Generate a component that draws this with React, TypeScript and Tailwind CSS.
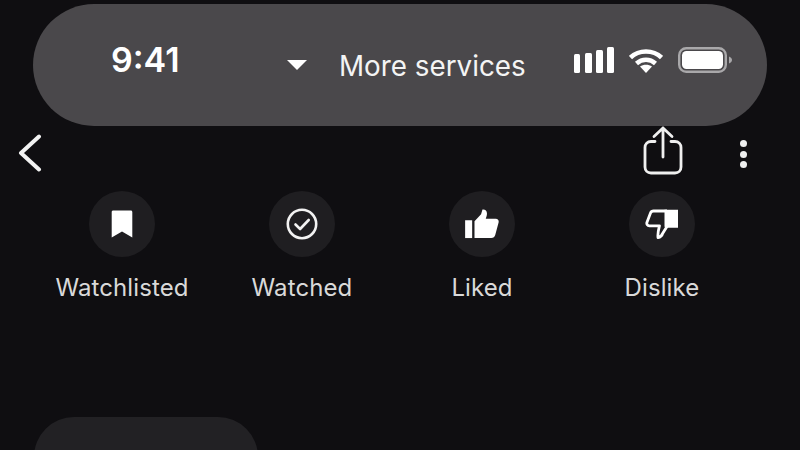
import React from 'react';

const font = { fontFamily: 'Inter' };

function Bookmark() {
  return (
    <svg width="22" height="28" viewBox="0 0 22 28" fill="white">
      <path d="M.7 2C.7 1 1.400.5 2.200.5h17.600c.9 0 1.500.6 1.500 1.500v25.500L11 21.500.7 27.500z" />
    </svg>
  );
}

function CheckCircle() {
  return (
    <svg width="34" height="34" viewBox="0 0 34 34" fill="none" stroke="#f2f2f2">
      <circle cx="17" cy="17" r="14.200" strokeWidth="2.600" />
      <path d="M10.500 17.500l4.600 4.500 8.600-9" strokeWidth="2.600" strokeLinecap="round" strokeLinejoin="round" />
    </svg>
  );
}

function ThumbUp() {
  return (
    <svg width="36" height="30" viewBox="0 0 36 32" fill="white">
      <rect x="0" y="12" width="7.500" height="19" />
      <path d="M10 13L17 5.500l1.500-5c2.800-.4 4.800 1.400 4.800 4.200 0 1.800-.5 3.500-1.300 5.600h10.500c2.600 0 3.800 2 3.200 4l-3.600 13.500c-.6 2-2 3.200-4.200 3.200H10z" />
    </svg>
  );
}

function ThumbDown() {
  return (
    <svg width="34" height="31" viewBox="0 0 34 31" fill="none">
      <path d="M22 2H8.500c-1.500 0-2.400.6-3 2L2 13.200c-.7 2 .5 3.600 2.400 3.600h10.100c-.6 2.600-2 6.200-1.500 11.700 3-.5 4-2 4.600-4l5-8" stroke="white" strokeWidth="2.800" strokeLinejoin="round" />
      <path d="M19.500.7H33v18H22l-2.500-1z" fill="white" />
    </svg>
  );
}

function Signal() {
  return (
    <svg width="40" height="26" viewBox="0 0 40 26" fill="white">
      <rect x="0" y="7" width="6" height="19" rx="1.500" />
      <rect x="11" y="6" width="7" height="20" rx="1.500" />
      <rect x="22" y="3" width="7" height="23" rx="1.500" />
      <rect x="33" y="0" width="7" height="26" rx="1.500" />
    </svg>
  );
}

function Wifi() {
  return (
    <svg width="34" height="25" viewBox="0 0 34 25" fill="none" stroke="white" strokeWidth="4.500">
      <path d="M1.500 9.500C10 1.500 24 1.500 32.500 9.500" />
      <path d="M7.500 15.500c5.500-5 13.500-5 19 0" />
      <path d="M17 25l-6-6.500c3.500-2.500 8.500-2.500 12 0z" fill="white" stroke="none" />
    </svg>
  );
}

function Battery() {
  return (
    <svg width="54" height="26" viewBox="0 0 54 26" fill="none">
      <rect x="1.200" y="1.200" width="46.600" height="23.600" rx="7" stroke="#a9a8aa" strokeWidth="2.400" />
      <rect x="4" y="4" width="41" height="18" rx="4.500" fill="white" />
      <path d="M51 9.500c2 .8 3 2 3 3.500s-1 2.700-3 3.500z" fill="#a9a8aa" />
    </svg>
  );
}

function Share() {
  return (
    <svg width="40" height="50" viewBox="0 0 40 50" fill="none" stroke="#efefef" strokeWidth="2.800" className="-mt-[5px]">
      <path d="M12 15.500H8c-3.500 0-6 2.500-6 6V41c0 3.500 2.500 6 6 6h24c3.500 0 6-2.500 6-6V21.500c0-3.500-2.500-6-6-6h-4" strokeLinecap="round" />
      <path d="M20 31V2M11 10.500L20 2l9 8.500" strokeLinecap="round" strokeLinejoin="round" />
    </svg>
  );
}

const actions = [
  { label: 'Watchlisted', icon: <Bookmark /> },
  { label: 'Watched', icon: <CheckCircle /> },
  { label: 'Liked', icon: <ThumbUp /> },
  { label: 'Dislike', icon: <ThumbDown /> },
];

export default function App() {
  return (
    <div className="w-[800px] h-[450px] overflow-hidden bg-[#0f0e11] pt-[4px] text-white" style={font}>
      <div className="mx-[33px] h-[122px] rounded-[61px] bg-[#4a484b] flex items-center">
        <span className="ml-[78px] w-[176px] text-[34px] leading-none font-semibold -mt-[10px]">9:41</span>
        <span className="w-0 h-0 border-x-[10px] border-x-transparent border-t-[10px] border-t-white"></span>
        <span className="ml-[32px] w-[235px] text-[27.800px] leading-none text-[#f4f4f4] mt-[3px]">More services</span>
        <div className="flex items-center gap-[15px] -mt-[10px]">
          <Signal />
          <Wifi />
          <Battery />
        </div>
      </div>

      <div className="flex items-center justify-between h-[50px] mt-[2px] pl-[18px] pr-[53px]">
        <svg width="24" height="38" viewBox="0 0 24 38" fill="none" stroke="#f2f2f2" strokeWidth="4" strokeLinecap="round" strokeLinejoin="round">
          <path d="M21 2.500L3 19l18 16.500" />
        </svg>
        <div className="flex items-center gap-[57px]">
          <Share />
          <div className="flex flex-col gap-[3.500px] mt-[2px]">
            <span className="w-[7px] h-[7px] rounded-full bg-[#efefef]"></span>
            <span className="w-[7px] h-[7px] rounded-full bg-[#efefef]"></span>
            <span className="w-[7px] h-[7px] rounded-full bg-[#efefef]"></span>
          </div>
        </div>
      </div>

      <div className="grid grid-cols-4 w-[720px] ml-[32px] mt-[13px]">
        {actions.map((a) => (
          <div key={a.label} className="flex flex-col items-center">
            <div className="w-[66px] h-[66px] rounded-full bg-[#1f1e21] flex items-center justify-center">{a.icon}</div>
            <span className="mt-[17px] text-[24px] leading-[28px] tracking-[0.1px] text-[#d9d9d9]">{a.label}</span>
          </div>
        ))}
      </div>

      <div className="ml-[34px] mt-[115px] w-[224px] h-[80px] rounded-[40px] bg-[#222124]"></div>
    </div>
  );
}
